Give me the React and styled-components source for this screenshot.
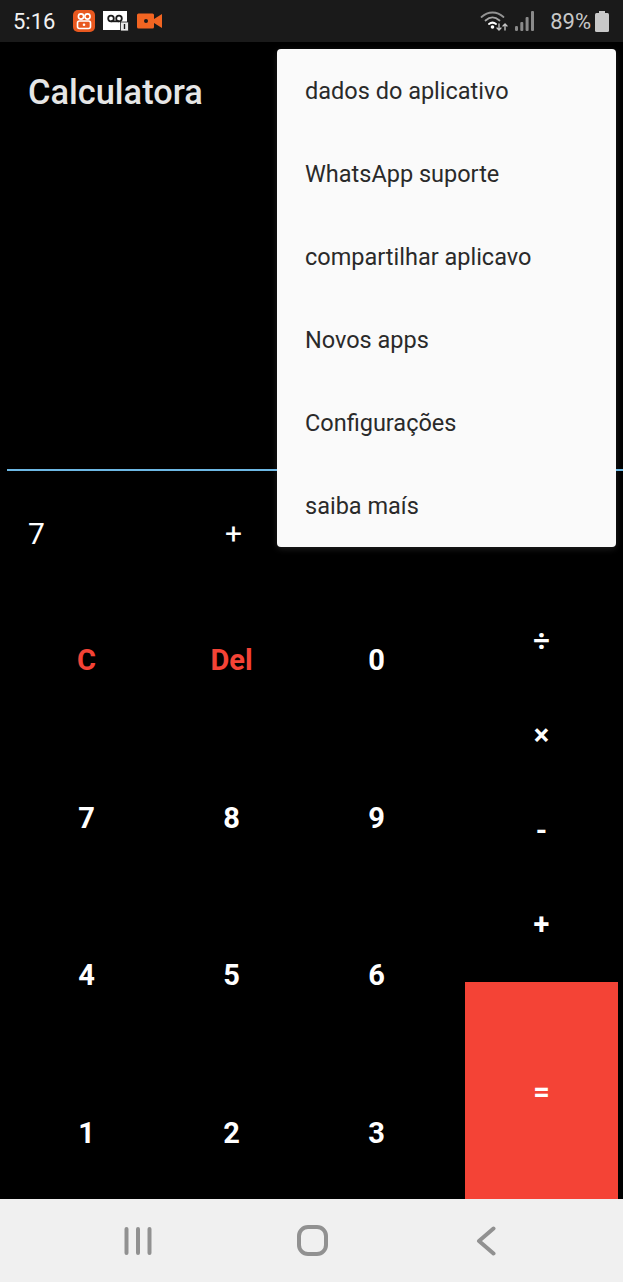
import React from "react";
import styled, { createGlobalStyle } from "styled-components";

const GlobalStyle = createGlobalStyle`
  html, body {
    margin: 0;
    padding: 0;
    background: #000;
  }
  * {
    box-sizing: border-box;
  }
`;

const Page = styled.div`
  width: 623px;
  height: 1282px;
  display: flex;
  flex-direction: column;
  overflow: hidden;
  font-family: Roboto, "Liberation Sans", sans-serif;
`;

const StatusBar = styled.div`
  height: 42px;
  flex: none;
  background: #1a1a1a;
  color: #f2f2f2;
  display: flex;
  align-items: center;
  padding: 0 14px 0 13px;
`;

const Clock = styled.span`
  font-size: 22px;
  width: 60px;
`;

const NotifIcons = styled.div`
  display: flex;
  align-items: center;
  gap: 8px;
`;

const SystemIcons = styled.div`
  margin-left: auto;
  display: flex;
  align-items: center;
  color: #c8c8c8;
`;

const Battery = styled.span`
  font-size: 22px;
  margin: 0 4px 0 16px;
`;

const Signal = styled.span`
  display: flex;
  margin-left: 5px;
  color: #8a8a8a;
`;

const Screen = styled.main`
  flex: 1;
  min-height: 0;
  position: relative;
  background: #000;
  overflow: hidden;
`;

const Title = styled.h1`
  margin: 0;
  height: 100px;
  padding: 29px 0 0 28px;
  font-size: 34.4px;
  line-height: 42px;
  font-weight: 500;
  color: #e6e6e6;
`;

const Display = styled.div`
  height: 329px;
  margin-left: 7px;
  border-bottom: 2px solid #6db8e4;
`;

const ExprRow = styled.div`
  height: 110px;
  padding: 14px 0 0 28px;
  display: flex;
  align-items: center;
  justify-content: flex-start;
  color: #fff;
`;

const ExprValue = styled.span`
  font-size: 30px;
  width: 197px;
`;

const ExprOp = styled.span`
  font-size: 30px;
`;

const Keypad = styled.div`
  display: flex;
  padding-left: 14px;
`;

const Digits = styled.div`
  width: 435px;
  display: grid;
  grid-template-columns: repeat(3, 145px);
  grid-auto-rows: 157.7px;
`;

const Key = styled.div`
  display: flex;
  align-items: center;
  justify-content: center;
  font-size: 29px;
  font-weight: 700;
  color: ${(p) => (p.$danger ? "#f44336" : "#fff")};
`;

const Operators = styled.div`
  width: 153px;
  margin-left: 16px;
  padding-top: 13px;
  display: flex;
  flex-direction: column;
`;

const OpKey = styled.div`
  height: 94.3px;
  display: flex;
  align-items: center;
  justify-content: center;
  font-size: 29px;
  font-weight: 700;
  color: #fff;
`;

const EqualKey = styled(OpKey)`
  height: 222px;
  margin-top: 11px;
  background: #f44336;
  padding-bottom: 2px;
`;

const Menu = styled.ul`
  position: absolute;
  top: 7px;
  left: 277px;
  width: 339px;
  margin: 0;
  padding: 0;
  list-style: none;
  background: #fafafa;
  border-radius: 4px;
  box-shadow: 0 2px 6px rgba(255, 255, 255, 0.12);
`;

const MenuItem = styled.li`
  height: 83px;
  padding-left: 28px;
  display: flex;
  align-items: center;
  font-size: 23.5px;
  color: #2a2a2a;
`;

const NavBar = styled.nav`
  height: 83px;
  flex: none;
  background: #f0f0f0;
  display: flex;
  align-items: center;
  color: #919191;
`;

const NavSlot = styled.div`
  flex: none;
  width: ${(p) => p.$w}px;
  display: flex;
  justify-content: center;
`;

const recents = (
  <svg width="28" height="28" viewBox="0 0 28 28" fill="none" stroke="currentColor" strokeWidth="4" strokeLinecap="round">
    <path d="M2.500 2v24M14 2v24M25.500 2v24" />
  </svg>
);

const home = (
  <svg width="31" height="31" viewBox="0 0 31 31" fill="none" stroke="currentColor" strokeWidth="4">
    <rect x="2" y="2" width="27" height="27" rx="9" />
  </svg>
);

const back = (
  <svg width="20" height="30" viewBox="0 0 20 30" fill="none" stroke="currentColor" strokeWidth="4" strokeLinecap="round" strokeLinejoin="round">
    <path d="M17.500 2.500 3 15l14.500 12.500" />
  </svg>
);

const appIcon = (
  <svg width="22" height="22" viewBox="0 0 22 22">
    <rect width="22" height="22" rx="5" fill="#e8581f" />
    <circle cx="8" cy="6.500" r="2.600" fill="none" stroke="#fff" strokeWidth="1.600" />
    <circle cx="14.500" cy="6.500" r="2.600" fill="none" stroke="#fff" strokeWidth="1.600" />
    <rect x="4.500" y="11" width="13" height="7.500" rx="2" fill="none" stroke="#fff" strokeWidth="1.600" />
    <circle cx="11" cy="14.700" r="1.300" fill="#fff" />
  </svg>
);

const voicemail = (
  <svg width="26" height="20" viewBox="0 0 26 20">
    <path d="M0 0h24v14h-6v5H0z" fill="#fff" />
    <circle cx="8" cy="7.500" r="2.800" fill="none" stroke="#1a1a1a" strokeWidth="1.800" />
    <circle cx="16" cy="7.500" r="2.800" fill="none" stroke="#1a1a1a" strokeWidth="1.800" />
    <path d="M8 10.300h8" stroke="#1a1a1a" strokeWidth="1.800" />
    <rect x="17.500" y="11" width="8" height="9" fill="#e8e8e8" stroke="#1a1a1a" strokeWidth="0.800" />
    <path d="M21.500 13v5" stroke="#1a1a1a" strokeWidth="1.400" />
  </svg>
);

const recorder = (
  <svg width="25" height="16" viewBox="0 0 25 16">
    <rect width="17" height="15" y="0.500" rx="1.500" fill="#f26522" />
    <path d="m17 6 8-5v14l-8-5z" fill="#f26522" />
    <circle cx="9" cy="8" r="2" fill="#1a1a1a" />
  </svg>
);

const wifi = (
  <svg width="30" height="22" viewBox="0 0 30 22" fill="none" stroke="currentColor" strokeLinecap="round">
    <path d="M1.500 7C8 1 17 1 23.500 7" strokeWidth="1.800" opacity="0.7" />
    <path d="M5.500 10.500c4.500-4 9.500-4 14 0" strokeWidth="1.800" opacity="0.8" />
    <path d="M9 14c2.500-2 4.500-2 7 0" strokeWidth="2" stroke="#fff" />
    <circle cx="12.500" cy="17" r="1.800" fill="#fff" stroke="none" />
    <path d="M19 14v6m-2-2 2 2 2-2M25 20v-6m-2 2 2-2 2 2" strokeWidth="1.300" />
  </svg>
);

const signal = (
  <svg width="19" height="20" viewBox="0 0 19 20" fill="currentColor">
    <rect x="0" y="15" width="3" height="5" rx="1.200" />
    <rect x="5.300" y="11" width="3" height="9" rx="1" />
    <rect x="10.600" y="6" width="3" height="14" rx="1" />
    <rect x="16" y="0" width="3" height="20" rx="1" />
  </svg>
);

const batteryIcon = (
  <svg width="14" height="21" viewBox="0 0 14 21" fill="currentColor">
    <path d="M4 0h6v2H4z" />
    <rect y="2" width="14" height="19" rx="1.500" />
  </svg>
);

const digitRows = ["C", "Del", "0", "7", "8", "9", "4", "5", "6", "1", "2", "3"];
const opKeys = ["÷", "×", "-", "+"];
const menuItems = [
  "dados do aplicativo",
  "WhatsApp suporte",
  "compartilhar aplicavo",
  "Novos apps",
  "Configurações",
  "saiba maís",
];

export default function App() {
  return (
    <Page>
      <GlobalStyle />
      <StatusBar>
        <Clock>5:16</Clock>
        <NotifIcons>
          {appIcon}
          {voicemail}
          {recorder}
        </NotifIcons>
        <SystemIcons>
          {wifi}
          <Signal>{signal}</Signal>
          <Battery>89%</Battery>
          {batteryIcon}
        </SystemIcons>
      </StatusBar>
      <Screen>
        <Title>Calculatora</Title>
        <Display />
        <ExprRow>
          <ExprValue>7</ExprValue>
          <ExprOp>+</ExprOp>
        </ExprRow>
        <Keypad>
          <Digits>
            {digitRows.map((k) => (
              <Key key={k} $danger={k === "C" || k === "Del"}>
                {k}
              </Key>
            ))}
          </Digits>
          <Operators>
            {opKeys.map((k) => (
              <OpKey key={k}>{k}</OpKey>
            ))}
            <EqualKey>=</EqualKey>
          </Operators>
        </Keypad>
        <Menu>
          {menuItems.map((m) => (
            <MenuItem key={m}>{m}</MenuItem>
          ))}
        </Menu>
      </Screen>
      <NavBar>
        <NavSlot $w={275}>{recents}</NavSlot>
        <NavSlot $w={74}>{home}</NavSlot>
        <NavSlot $w={274}>{back}</NavSlot>
      </NavBar>
    </Page>
  );
}
